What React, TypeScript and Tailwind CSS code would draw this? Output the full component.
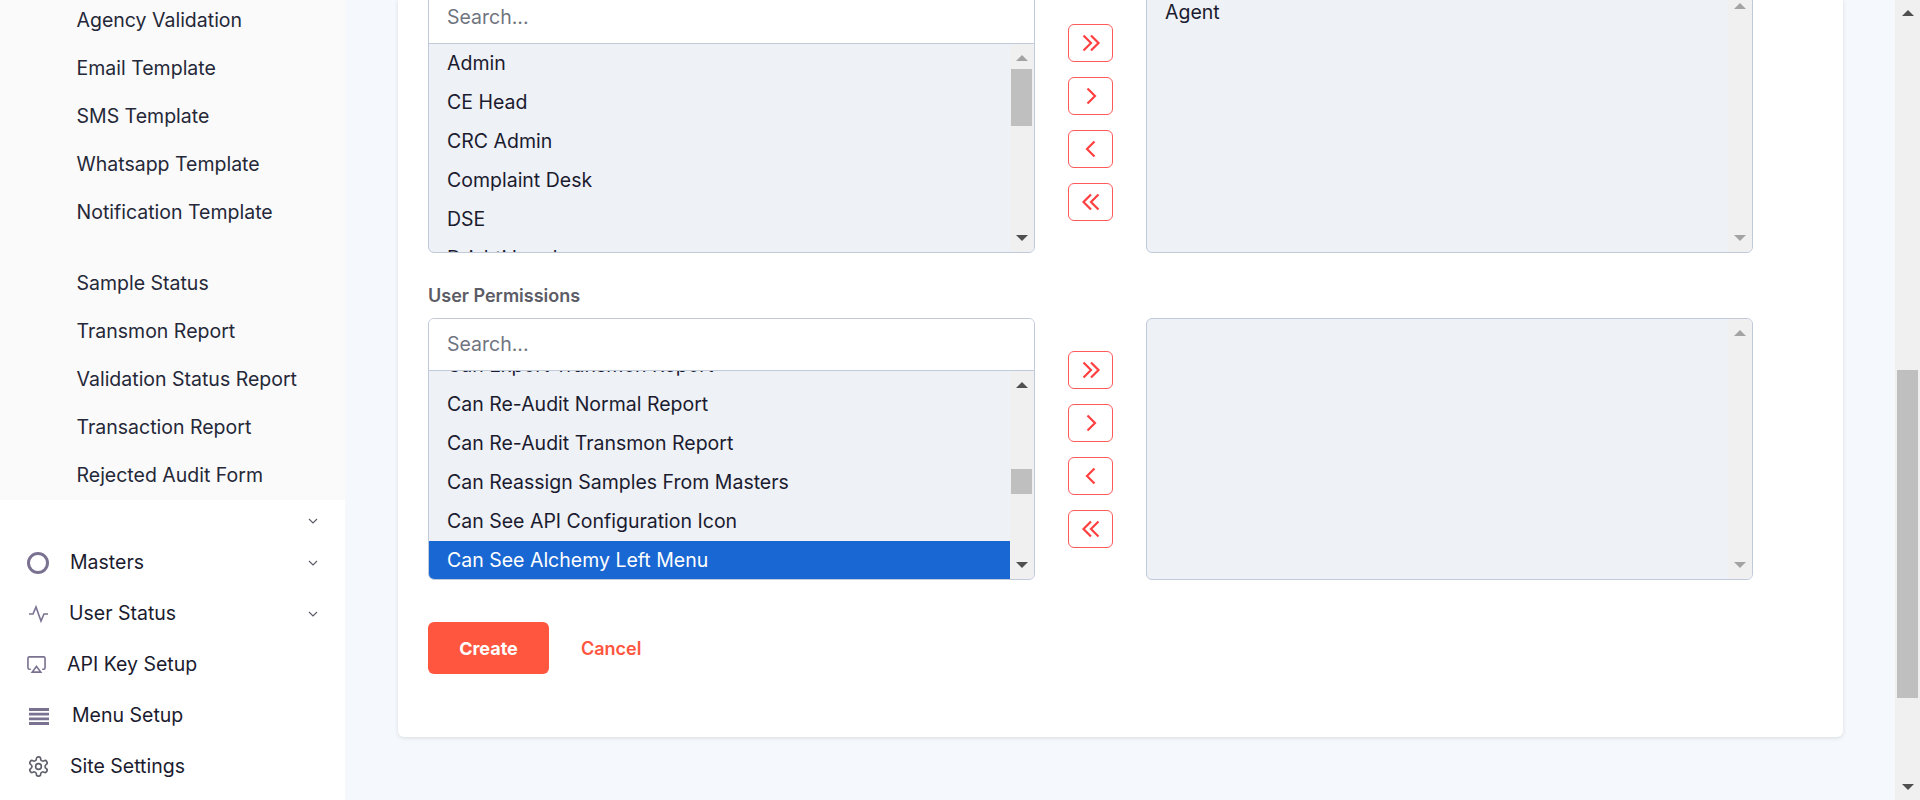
import React from "react";

const font = "font-['Inter',sans-serif]";

function Chevron({ dir, double }: { dir: "l" | "r"; double?: boolean }) {
  const paths = dir === "r"
    ? double
      ? ["M4.500 4.500l7.500 7.500-7.500 7.500", "M12 4.500l7.500 7.500-7.500 7.500"]
      : ["M8.500 4.500l7.500 7.500-7.500 7.500"]
    : double
      ? ["M19.500 4.500L12 12l7.500 7.500", "M12 4.500L4.500 12l7.500 7.500"]
      : ["M15.500 4.500L8 12l7.500 7.500"];
  return (
    <svg viewBox="0 0 24 24" className="w-[24px] h-[24px]" fill="none" stroke="#ff4040" strokeWidth="2.2">
      {paths.map((d) => (
        <path key={d} d={d} />
      ))}
    </svg>
  );
}

function Tri({ up, dark }: { up?: boolean; dark?: boolean }) {
  return (
    <svg viewBox="0 0 12 6" className="w-[12px] h-[6px]" fill={dark ? "#505050" : "#a3a3a3"}>
      <path d={up ? "M6 0l6 6H0z" : "M0 0h12L6 6z"} />
    </svg>
  );
}

function Track({
  thumbTop,
  thumbH,
  upDark,
  downDark,
}: {
  thumbTop?: number;
  thumbH?: number;
  upDark?: boolean;
  downDark?: boolean;
}) {
  return (
    <div className="w-[24px] shrink-0 bg-[#f0f0f0] flex flex-col items-center relative h-full">
      <div className="absolute top-[11px]">
        <Tri up dark={upDark} />
      </div>
      {thumbH ? (
        <div
          className="absolute left-[1px] w-[21px] bg-[#bfbfbf]"
          style={{ top: thumbTop, height: thumbH }}
        />
      ) : null}
      <div className="absolute bottom-[11px]">
        <Tri dark={downDark} />
      </div>
    </div>
  );
}

function LeftBox({
  items,
  offset,
  activeLast,
  thumbTop,
  thumbH,
  upDark,
}: {
  items: string[];
  offset: string;
  activeLast?: boolean;
  thumbTop: number;
  thumbH: number;
  upDark?: boolean;
}) {
  return (
    <div className="w-[607px] h-[262px] shrink-0 border border-[#c0cadb] rounded-[6px] overflow-hidden flex flex-col bg-[#eef1f6]">
      <div className="h-[52px] shrink-0 bg-white border-b border-[#c0cadb] flex items-center pl-[18px] text-[19.5px] text-[#6f7580]">
        Search...
      </div>
      <div className="flex-1 flex min-h-0">
        <div className="flex-1 min-w-0 overflow-hidden">
          <div className={`flex flex-col ${offset}`}>
            {items.map((t, i) => (
              <div
                key={t}
                className={`h-[39px] shrink-0 flex items-center pl-[18px] text-[19.5px] whitespace-nowrap ${
                  activeLast && i === items.length - 1 ? "bg-[#1967d2] text-white" : "text-[#1b1b2f]"
                }`}
              >
                {t}
              </div>
            ))}
          </div>
        </div>
        <Track thumbTop={thumbTop} thumbH={thumbH} upDark={upDark} downDark />
      </div>
    </div>
  );
}

function RightBox({ children }: { children?: React.ReactNode }) {
  return (
    <div className="w-[607px] h-[262px] shrink-0 border border-[#c0cadb] rounded-[6px] overflow-hidden flex bg-[#eef1f6]">
      <div className="flex-1 min-w-0">{children}</div>
      <Track />
    </div>
  );
}

function MoveButtons() {
  const btn = "w-[45px] h-[37.5px] rounded-[6px] border border-[#ff5a5a] bg-white flex items-center justify-center";
  return (
    <div className="w-[111px] shrink-0 flex flex-col items-center gap-[15.5px] pt-[33px]">
      <div className={btn}><Chevron dir="r" double /></div>
      <div className={btn}><Chevron dir="r" /></div>
      <div className={btn}><Chevron dir="l" /></div>
      <div className={btn}><Chevron dir="l" double /></div>
    </div>
  );
}

const subTop = ["Agency Validation", "Email Template", "SMS Template", "Whatsapp Template", "Notification Template"];
const subBottom = ["Sample Status", "Transmon Report", "Validation Status Report", "Transaction Report", "Rejected Audit Form"];

function SubItem({ t }: { t: string }) {
  return <div className="h-[48px] flex items-center pl-[76.5px] text-[19.5px] text-[#252838] whitespace-nowrap">{t}</div>;
}

function Caret() {
  return (
    <svg viewBox="0 0 10 6" className="w-[10px] h-[6px]" fill="none" stroke="#5a5a66" strokeWidth="1.1">
      <path d="M1 1l4 4 4-4" />
    </svg>
  );
}

function NavItem({
  icon,
  label,
  pad,
  caret,
}: {
  icon: React.ReactNode;
  label: string;
  pad: string;
  caret?: boolean;
}) {
  return (
    <div className="h-[51px] flex items-center pl-[27px] pr-[27px] text-[#1b1b2f]">
      <div className="flex items-center shrink-0">{icon}</div>
      <span className={`${pad} flex-1 whitespace-nowrap text-[19.5px]`}>{label}</span>
      {caret ? <Caret /> : null}
    </div>
  );
}

export default function App() {
  return (
    <div className={`${font} w-[1920px] h-[800px] overflow-hidden flex bg-[#f5f8fd]`}>
      <aside className="w-[345px] shrink-0 h-full bg-white flex flex-col overflow-hidden">
        <div className="bg-[#fafafa] h-[500px] shrink-0 overflow-hidden">
          <div className="-mt-[3px]">
            {subTop.map((t) => (
              <SubItem key={t} t={t} />
            ))}
            <div className="h-[23px]" />
            {subBottom.map((t) => (
              <SubItem key={t} t={t} />
            ))}
          </div>
        </div>
        <div className="h-[37px] shrink-0 flex items-center justify-end pr-[27px] pt-[5px]">
          <Caret />
        </div>
        <NavItem
          label="Masters"
          pad="pl-[21px]"
          caret
          icon={
            <svg viewBox="0 0 22 22" className="w-[22px] h-[22px]" fill="none" stroke="#7a7290" strokeWidth="3">
              <circle cx="11" cy="11" r="9.5" />
            </svg>
          }
        />
        <NavItem
          label="User Status"
          pad="pl-[20px]"
          caret
          icon={
            <svg viewBox="0 0 22 22" className="w-[22px] h-[22px]" fill="none" stroke="#7a7290" strokeWidth="1.6">
              <path d="M2 11h4l3-7 5 14 3-7h4" />
            </svg>
          }
        />
        <NavItem
          label="API Key Setup"
          pad="pl-[21px]"
          icon={
            <svg viewBox="0 0 20 20" className="w-[19px] h-[19px]" fill="none" stroke="#7a7290" strokeWidth="1.7">
              <path d="M4 15H2.500A1.500 1.500 0 0 1 1 13.500v-10A1.500 1.500 0 0 1 2.500 2h15A1.500 1.500 0 0 1 19 3.500v10a1.500 1.500 0 0 1-1.500 1.500H16" />
              <path d="M10 12l4.500 6h-9z" />
            </svg>
          }
        />
        <NavItem
          label="Menu Setup"
          pad="pl-[23px]"
          icon={
            <svg viewBox="0 0 22 18" className="w-[22px] h-[18px]" fill="none" stroke="#7a7290" strokeWidth="2.800">
              <path d="M2 2.500h20M2 7.200h20M2 11.800h20M2 16.500h20" />
            </svg>
          }
        />
        <NavItem
          label="Site Settings"
          pad="pl-[20px]"
          icon={
            <svg viewBox="0 0 24 24" className="w-[23px] h-[23px]" fill="none" stroke="#5f5f6b" strokeWidth="1.7" strokeLinecap="round" strokeLinejoin="round">
              <path d="M12.220 2h-.44a2 2 0 0 0-2 2v.18a2 2 0 0 1-1 1.730l-.43.250a2 2 0 0 1-2 0l-.15-.080a2 2 0 0 0-2.730.730l-.22.380a2 2 0 0 0 .730 2.730l.15.100a2 2 0 0 1 1 1.720v.510a2 2 0 0 1-1 1.740l-.15.090a2 2 0 0 0-.730 2.730l.22.380a2 2 0 0 0 2.730.730l.15-.080a2 2 0 0 1 2 0l.43.250a2 2 0 0 1 1 1.730V20a2 2 0 0 0 2 2h.44a2 2 0 0 0 2-2v-.18a2 2 0 0 1 1-1.730l.43-.250a2 2 0 0 1 2 0l.15.080a2 2 0 0 0 2.730-.730l.22-.390a2 2 0 0 0-.730-2.730l-.15-.080a2 2 0 0 1-1-1.740v-.500a2 2 0 0 1 1-1.740l.15-.090a2 2 0 0 0 .730-2.730l-.22-.380a2 2 0 0 0-2.730-.730l-.15.080a2 2 0 0 1-2 0l-.43-.250a2 2 0 0 1-1-1.730V4a2 2 0 0 0-2-2z" />
              <circle cx="12" cy="12" r="3" />
            </svg>
          }
        />
      </aside>

      <main className="flex-1 min-w-0 h-full overflow-hidden pl-[53px]">
        <div className="w-[1445px] h-[737px] bg-white rounded-b-[6px] shadow-[0_1px_4px_rgba(0,0,0,0.12)] pl-[30px] flex flex-col">
          <div className="flex h-[262px] shrink-0 -mt-[9px]">
            <LeftBox
              items={["Admin", "CE Head", "CRC Admin", "Complaint Desk", "DSE", "Drishti Lead"]}
              offset=""
              thumbTop={25}
              thumbH={57}
            />
            <MoveButtons />
            <RightBox>
              <div className="pl-[18px] pt-[6px] text-[19.5px] text-[#1b1b2f]">Agent</div>
            </RightBox>
          </div>
          <div className="mt-[33px] h-[32px] shrink-0 text-[18px] font-semibold text-[#5c5c66] leading-[20px]">
            User Permissions
          </div>
          <div className="flex h-[262px] shrink-0">
            <LeftBox
              items={[
                "Can Export Transmon Report",
                "Can Re-Audit Normal Report",
                "Can Re-Audit Transmon Report",
                "Can Reassign Samples From Masters",
                "Can See API Configuration Icon",
                "Can See Alchemy Left Menu",
              ]}
              offset="-mt-[25px]"
              activeLast
              thumbTop={98}
              thumbH={25}
              upDark
            />
            <MoveButtons />
            <RightBox />
          </div>
          <div className="mt-[42px] flex items-center shrink-0">
            <div className="w-[121px] h-[52px] rounded-[6px] bg-[#ff5640] text-white text-[18px] font-bold flex items-center justify-center">
              Create
            </div>
            <div className="ml-[32px] text-[18px] font-semibold text-[#ff5640]">Cancel</div>
          </div>
        </div>
      </main>

      <div className="w-[25px] shrink-0 h-full bg-[#f0f0f0] relative">
        <div className="absolute top-[10px] left-[7px]"><Tri up dark /></div>
        <div className="absolute top-[370px] left-[2px] w-[21px] h-[328px] bg-[#bfbfbf]" />
        <div className="absolute bottom-[10px] left-[7px]"><Tri dark /></div>
      </div>
    </div>
  );
}
